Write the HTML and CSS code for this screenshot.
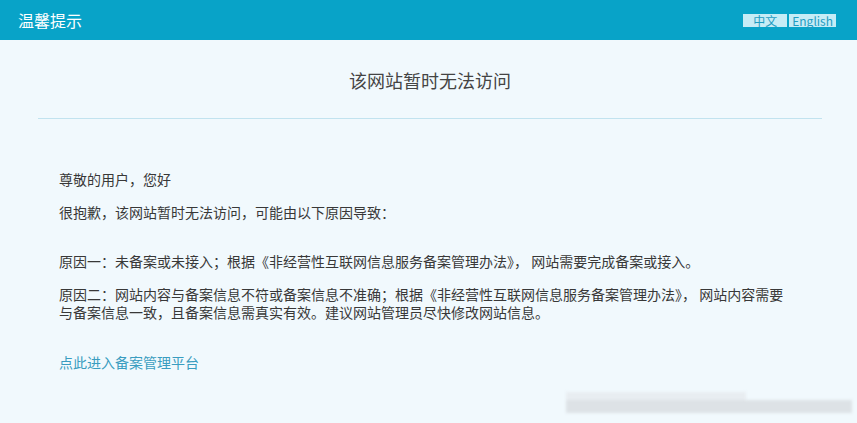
FILE: index.html
```html
<!DOCTYPE html>
<html lang="zh-CN">
<head>
    <meta charset="UTF-8">
    <title>温馨提示</title>
    <link rel="stylesheet" href="styles.css">
</head>
<body>
    <div class="topbar">
        <div class="brand">温馨提示</div>
        <div class="lang">
            <span class="lang-btn">中文</span>
            <span class="lang-btn">English</span>
        </div>
    </div>

    <div class="main">
        <h1 class="title">该网站暂时无法访问</h1>
        <div class="content">
            <p>尊敬的用户，您好</p>
            <p class="gap">很抱歉，该网站暂时无法访问，可能由以下原因导致：</p>
            <p>原因一：未备案或未接入；根据《非经营性互联网信息服务备案管理办法》， 网站需要完成备案或接入。</p>
            <p>原因二：网站内容与备案信息不符或备案信息不准确；根据《非经营性互联网信息服务备案管理办法》， 网站内容需要与备案信息一致，且备案信息需真实有效。建议网站管理员尽快修改网站信息。</p>
            <a class="link" href="#">点此进入备案管理平台</a>
        </div>
    </div>

    <div class="watermark">
        <span class="wm-top"></span>
        <span class="wm-row"></span>
    </div>
</body>
</html>
```

FILE: styles.css
```css
body {
    margin: 0;
    background: #f1f9fd;
    color: #383838;
    font-family: "Noto Sans", "Noto Sans CJK SC", sans-serif;
    font-size: 14px;
}

.topbar {
    height: 40px;
    background: #08a3c8;
    display: flex;
    align-items: center;
    justify-content: space-between;
    padding: 0 21px 0 18px;
}
.brand { color: #fff; font-size: 16px; font-family: "Noto Sans CJK SC", sans-serif; }
.lang { display: flex; gap: 2px; }
.lang-btn {
    background: #c6ecf6;
    color: #1e9cc2;
    font-size: 12px;
    line-height: 13px;
    padding: 0 3px;
    font-family: "Noto Sans CJK SC", sans-serif;
}
.lang-btn:first-child { padding: 0 10px; }

.main { margin: 0 35px 0 38px; }
.title {
    margin: 0;
    padding: 28px 0 26px;
    text-align: center;
    font-size: 18px;
    line-height: 24px;
    font-weight: normal;
    color: #444;
    font-family: "Noto Sans CJK SC", sans-serif;
    border-bottom: 1px solid #c2e3ef;
}

.content {
    padding: 51px 30px 0 21px;
    font-family: "Noto Sans CJK SC", sans-serif;
}
.content p { margin: 0 0 15px; line-height: 18px; }
.content p.gap { margin-bottom: 31px; }
.link {
    display: block;
    margin-top: 32px;
    line-height: 18px;
    color: #3a9dc0;
    text-decoration: none;
}

.watermark {
    position: absolute;
    left: 566px;
    top: 392px;
    width: 286px;
    filter: blur(1.5px);
}
.wm-top { display: block; height: 8px; width: 180px; background: #e8edf1; }
.wm-row { display: block; height: 13px; background: #dde2e6; }
```
